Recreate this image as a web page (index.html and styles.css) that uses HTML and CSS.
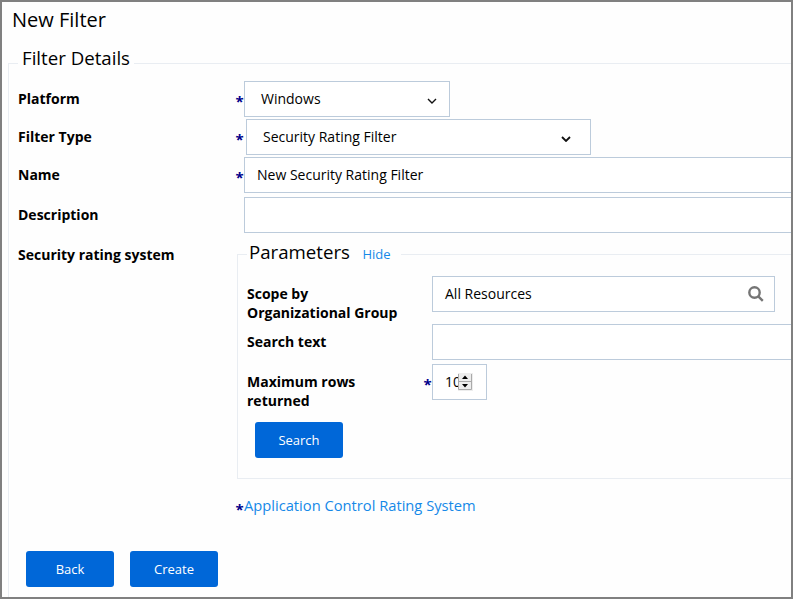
FILE: index.html
```html
<!DOCTYPE html>
<html lang="en">
<head>
<meta charset="utf-8">
<title>New Filter</title>
<link rel="stylesheet" href="styles.css">
</head>
<body>
<main class="frame">
  <h1 class="title">New Filter</h1>
  <fieldset class="group details">
    <legend class="legend">Filter Details</legend>
    <div class="row">
      <span class="label">Platform</span><span class="req">*</span>
      <div class="field select platform"><span>Windows</span><svg class="chevron" viewBox="0 0 10 6"><path d="M1 1l4 4 4-4"/></svg></div>
    </div>
    <div class="row">
      <span class="label">Filter Type</span><span class="req">*</span>
      <div class="field select type"><span>Security Rating Filter</span><svg class="chevron bold" viewBox="0 0 10 6"><path d="M1 1l4 4 4-4"/></svg></div>
    </div>
    <div class="row">
      <span class="label">Name</span><span class="req">*</span>
      <div class="field">New Security Rating Filter</div>
    </div>
    <div class="row description">
      <span class="label">Description</span><span class="req"></span>
      <div class="field"></div>
    </div>
    <div class="rating">
      <span class="label rating-label">Security rating system</span>
      <div class="rating-body">
        <fieldset class="group params">
          <legend class="legend">Parameters<a class="hide">Hide</a></legend>
          <div class="prow scope">
            <span class="label">Scope by<br>Organizational Group</span><span class="req"></span>
            <div class="field picker"><span>All Resources</span><svg class="lens" viewBox="0 0 16 16"><circle cx="6.5" cy="6.5" r="5.2"/><path d="M10.3 10.3l4.5 4.5"/></svg></div>
          </div>
          <div class="prow">
            <span class="label">Search text</span><span class="req"></span>
            <div class="field"></div>
          </div>
          <div class="prow">
            <span class="label">Maximum rows<br>returned</span><span class="req">*</span>
            <div class="field number"><span class="digits">10</span><svg class="spinner" viewBox="0 0 15 18"><path class="spin-bg" d="M0 0h15v18H0z"/><path class="spin-edge" d="M.5 1v15.500h13V1M0 8.500h14"/><path class="spin-arrow" d="M4 6h6L7 2.500zM4 11h6l-3 3.500z"/></svg></div>
          </div>
          <button class="button search">Search</button>
        </fieldset>
        <div class="system"><span class="req">*</span><a class="system-link">Application Control Rating System</a></div>
      </div>
    </div>
    <div class="actions">
      <button class="button">Back</button>
      <button class="button">Create</button>
    </div>
  </fieldset>
</main>
</body>
</html>
```
FILE: styles.css
```css
* { box-sizing: border-box; }
body { margin: 0; font: 14px/19px "Open Sans", "Noto Sans", sans-serif; color: #000; }
.frame { height: 599px; border: 2px solid #808080; overflow: hidden; background: #fefefe; }
.title { margin: 4px 0 0 10px; height: 44px; font-size: 20px; line-height: 28px; font-weight: 400; }
.group { margin: 0; padding: 0; border: 1px solid #e9edf2; min-width: 0; }
.legend { height: 27px; font-size: 18.67px; white-space: nowrap; }
.details { margin-left: 6px; width: 900px; height: 620px; padding: 4px 0 0 9px; }
.details > .legend { padding: 0 4px; line-height: 16px; }
.row { display: grid; grid-template-columns: 218px 8px 1fr; height: 36px; margin-bottom: 2px; }
.label { font-weight: 700; line-height: 19px; padding-top: 8px; }
.req { color: #00008b; font-size: 15px; font-weight: 700; line-height: 19px; padding-top: 11px; margin-left: -0.5px; }
.field { height: 36px; border: 1px solid #bccbdb; background: #fff; padding: 0 12px; line-height: 34px; white-space: nowrap; }
.select { display: flex; justify-content: space-between; padding: 0 12px 0 16px; }
.platform { width: 206px; }
.type { width: 345px; margin-left: 2px; padding-right: 19px; }
.chevron { width: 10px; height: 6px; margin-top: 16px; fill: none; stroke: #111; stroke-width: 1.4; }
.chevron.bold { stroke-width: 1.8; }
.description { margin-top: 4px; }
.rating { display: flex; margin-top: 8px; }
.rating-label { width: 219px; padding-top: 4px; flex: none; }
.rating-body { flex: 1; min-width: 0; }
.params { height: 238px; padding: 8px 0 0 9px; }
.params > .legend { margin-left: 0; padding: 0 10px 0 2px; line-height: 22px; }
.hide { font-size: 13px; color: #1589e8; margin-left: 12.5px; }
.prow { display: grid; grid-template-columns: 177px 8px 1fr; height: 36px; margin-bottom: 4px; }
.scope { margin-bottom: 12px; }
.picker { width: 343px; display: flex; justify-content: space-between; padding-right: 10px; }
.lens { width: 16px; height: 16px; margin-top: 9px; fill: none; stroke: #757575; stroke-width: 2.4; }
.number { width: 55px; display: flex; }
.digits { width: 17px; flex: none; }
.spinner { width: 15px; height: 18px; margin: 8px 0 0 -4px; flex: none; }
.spin-bg { fill: #ededed; }
.spin-edge { fill: none; stroke: #aaa; }
.spin-arrow { fill: #000; }
.button { width: 88px; height: 36px; border: 0; border-radius: 3px; background: #0067d8; color: #fff; font: 13px/19px "Open Sans", "Noto Sans", sans-serif; padding: 0; }
.search { display: block; margin: 22px 0 0 8px; }
.system { display: flex; margin: 16px 0 0 -1px; height: 23px; }
.system .req { width: 8.5px; padding-top: 5px; }
.system-link { font-size: 14.7px; line-height: 20px; color: #1589e8; }
.actions { display: flex; gap: 16px; margin: 33px 0 0 8px; }
```
